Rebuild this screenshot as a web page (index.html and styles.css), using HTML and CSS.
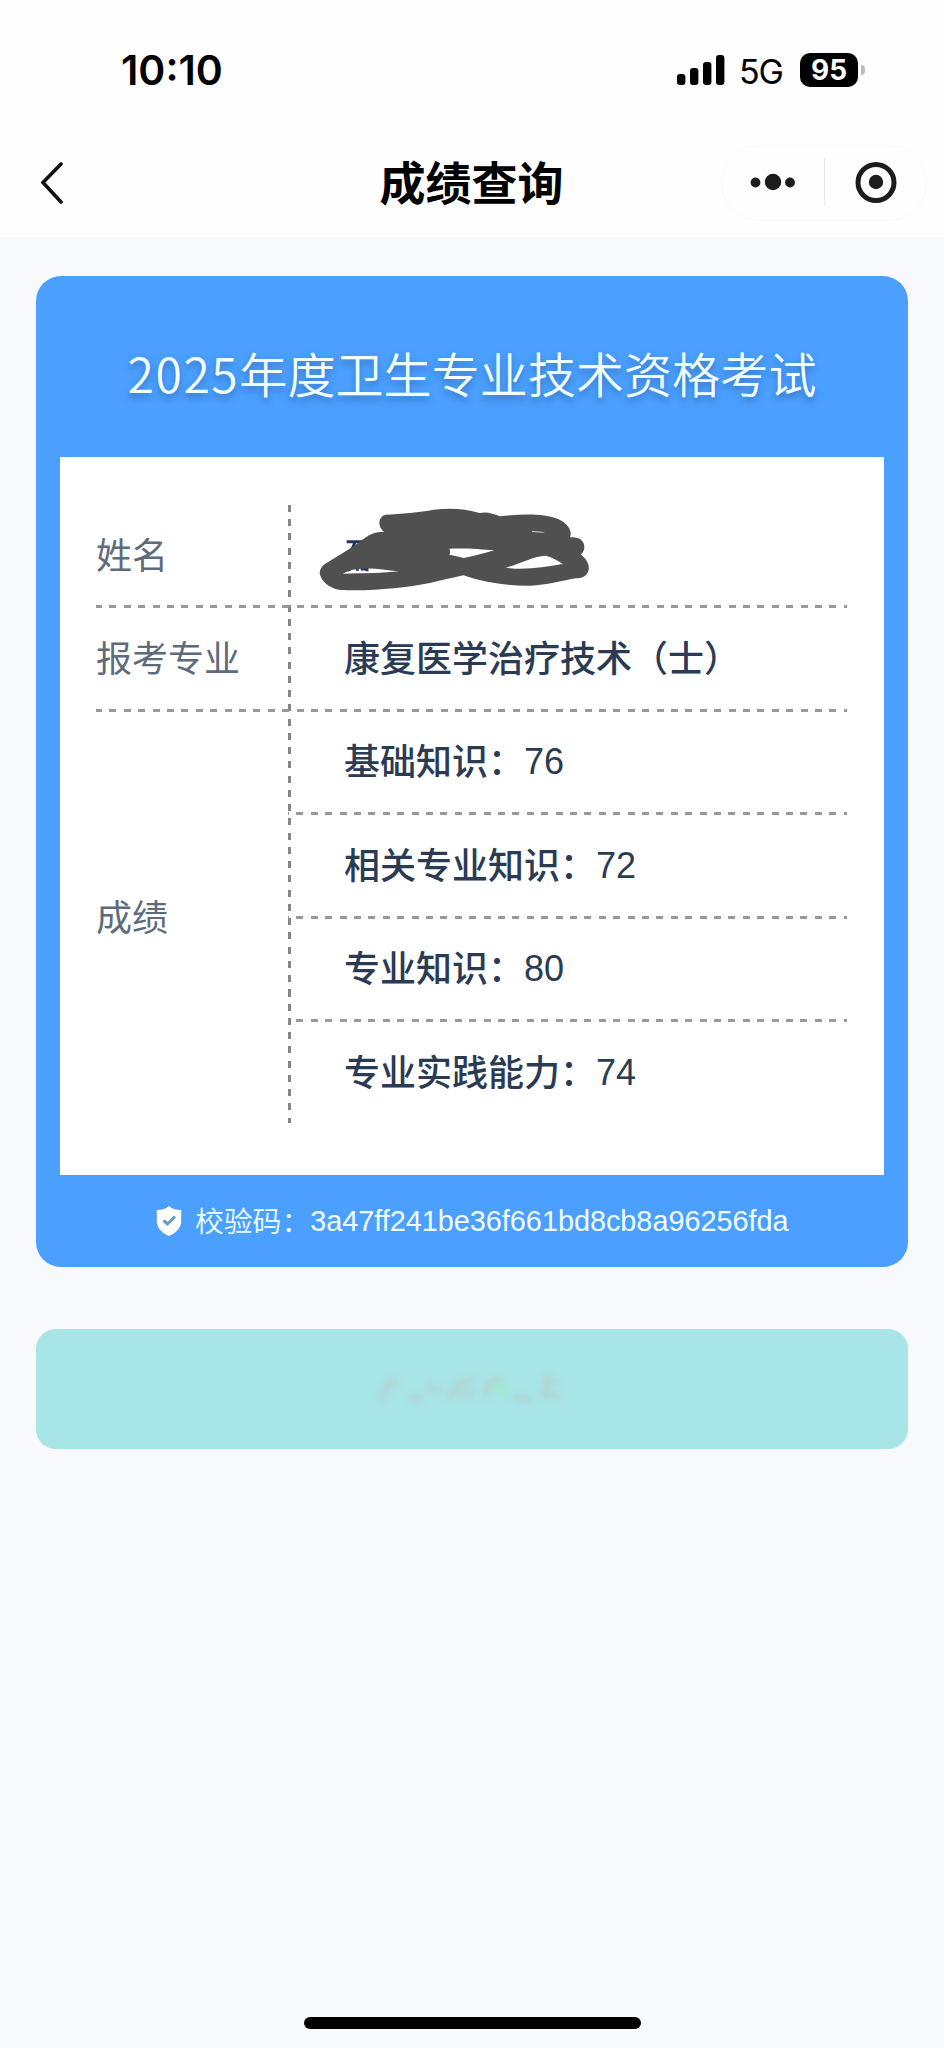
FILE: index.html
```
<!DOCTYPE html>
<html lang="zh-CN">
<head>
<meta charset="UTF-8" />
<title>成绩查询</title>
<link rel="stylesheet" href="styles.css">
</head>
<body>

<div class="status-bar">
  <span class="time">10:10</span>
  <div class="status-right">
    <svg class="signal" width="48" height="30" viewBox="0 0 48 30">
      <rect x="0" y="19" width="8.4" height="11" rx="3" />
      <rect x="13" y="13" width="8.4" height="17" rx="3" />
      <rect x="26" y="7" width="8.4" height="23" rx="3" />
      <rect x="39" y="0" width="8.4" height="30" rx="3" />
    </svg>
    <span class="network">5G</span>
    <span class="battery">95</span>
    <span class="battery-tip"></span>
  </div>
</div>

<div class="nav">
  <svg class="back" width="24" height="42" viewBox="0 0 24 42">
    <path d="M21 2 L3 20.5 L21 40" />
  </svg>
  <h1>成绩查询</h1>
  <div class="capsule">
    <svg width="204" height="74" viewBox="0 1 204 74">
      <circle cx="33.5" cy="37.5" r="4.9" />
      <circle cx="51" cy="37" r="8.2" />
      <circle cx="68" cy="37.5" r="4.9" />
      <path class="divider" d="M102.5 12 V61" />
      <circle class="ring" cx="154" cy="37.5" r="18" />
      <circle cx="154" cy="37" r="7.2" />
    </svg>
  </div>
</div>

<div class="card">
  <h2><span class="year">2025</span>年度卫生专业技术资格考试</h2>

  <div class="sheet">
    <div class="table">
      <div class="row">
        <div class="label">姓名</div>
        <div class="value">
          <svg class="scribble" width="280" height="90" viewBox="80 75 840 270">
            <g class="name-mark">
              <path d="M169 182 H215 M194 183 Q190 198 181 210" />
              <path d="M172 268 L184 261 M201 256 V269 M211 264 H230 V271 M465 211 H474 V218" />
            </g>
            <path class="ink" fill-rule="evenodd" d="M281 152 C262 140 262 108 285 101 C330 99 390 94 430 86 C480 80 525 83 568 96 C590 91 606 97 629 106 C690 99 760 96 805 115 C833 128 847 151 839 169 C869 167 883 180 882 201 C880 214 870 221 872 221 C889 233 898 252 895 267 C889 289 873 291 857 292 C810 300 770 312 720 314 C650 315 580 305 519 283 C450 298 390 316 310 322 C250 328 190 330 144 326 C115 320 93 301 88 277 C89 259 100 250 115 242 C155 218 184 201 206 184 C238 158 252 153 281 152 Z
              M157 278 C174 268 197 262 222 263 C251 261 286 267 326 271 C277 276 225 277 157 278 Z
              M477 203 C525 201 575 205 612 208 C585 215 554 225 520 231 C504 226 492 224 477 221 Z
              M647 260 C693 247 730 225 766 224 C787 229 805 240 817 249 C760 258 703 269 647 260 Z
              M725 151 Q745 151 765 154 Q750 155 725 153 Z" />
          </svg>
        </div>
      </div>
      <div class="row">
        <div class="label">报考专业</div>
        <div class="value">康复医学治疗技术（士）</div>
      </div>
      <div class="row scores">
        <div class="label">成绩</div>
        <div class="score-list">
          <div class="value">基础知识：<span class="num">76</span></div>
          <div class="value">相关专业知识：<span class="num">72</span></div>
          <div class="value">专业知识：<span class="num">80</span></div>
          <div class="value">专业实践能力：<span class="num">74</span></div>
        </div>
      </div>
    </div>
  </div>

  <div class="verify">
    <svg class="shield" width="26" height="30" viewBox="0 0 26 30">
      <path d="M13 0 C16 3 21 4 25.2 4 V15 C25.2 22 20 27 13 30 C6 27 .8 22 .8 15 V4 C5 4 10 3 13 0 Z" />
      <path class="check" d="M7.5 14.5 L11.5 18 L19 10.5" />
    </svg>
    <span class="verify-label">校验码：</span><span class="code">3a47ff241be36f661bd8cb8a96256fda</span>
  </div>
</div>

<div class="action">
  <!-- faded caption -->
  <svg width="190" height="46" viewBox="0 0 190 46">
    <path d="M4 35 L12 16 L22 18 M32 33 L46 30 M50 20 L64 26 M72 34 L80 18 L97 14 M80 27 L98 28 M108 32 L112 16 L126 13 M136 30 L156 34 M166 34 L170 12 L180 18 M164 25 L182 30" />
    <path class="tint" d="M120 24 L130 26" />
  </svg>
</div>

<div class="home-bar"></div>

</body>
</html>
```
FILE: styles.css
```
* {
  box-sizing: border-box;
}
body {
  margin: 0;
  height: 2048px;
  display: flex;
  flex-direction: column;
  background-color: #f8f9fd;
  font-family: "Liberation Sans", "Noto Sans CJK SC", sans-serif;
  overflow: hidden;
}
.status-bar {
  height: 128px;
  padding: 12px 79px 0 121px;
  display: flex;
  align-items: center;
  justify-content: space-between;
  background: #fefefe;
  font-family: Inter, sans-serif;
}
.time {
  font-size: 41px;
  font-weight: 600;
}
.status-right {
  display: flex;
  align-items: center;
}
.network {
  margin: 2px 17px 0 14px;
  font-size: 34px;
  letter-spacing: -1px;
}
.battery {
  width: 58px;
  height: 34px;
  line-height: 34px;
  border-radius: 10px;
  background: #000;
  color: #fff;
  font-size: 28px;
  font-weight: 700;
  text-align: center;
}
.battery-tip {
  width: 4px;
  height: 10px;
  margin-left: 3px;
  border-radius: 0 4px 4px 0;
  background: #bbb;
}
.nav {
  height: 109px;
  padding: 0 17px 0 40px;
  display: grid;
  grid-template-columns: 206px 1fr 206px;
  align-items: center;
  background: #fefefe;
}
.back {
  fill: none;
  stroke: #111;
  stroke-width: 3.6;
  stroke-linecap: round;
}
.nav h1 {
  margin: 2px 24px 0 0;
  font-size: 46px;
  line-height: 60px;
  font-weight: 700;
  text-align: center;
}
.capsule {
  height: 76px;
  border: 1px solid #fafafa;
  border-radius: 38px;
  fill: #1c1c1c;
}
.capsule svg {
  display: block;
}
.divider {
  stroke: #e9e9e9;
  stroke-width: 1;
}
.ring {
  fill: none;
  stroke: #1c1c1c;
  stroke-width: 5;
}
.card {
  margin: 39px 36px 0;
  padding: 0 24px;
  height: 991px;
  border-radius: 25px;
  background: #4a9fff;
  color: #f2ffff;
}
.card h2 {
  margin: 0 -20px;
  height: 181px;
  padding-top: 15px;
  line-height: 162px;
  font-family: "Noto Sans CJK SC", sans-serif;
  font-size: 48px;
  font-weight: 350;
  letter-spacing: 0.1px;
  text-align: center;
  white-space: nowrap;
  text-shadow: 0 4px 6px rgba(40, 80, 130, 0.5);
}
.year {
  letter-spacing: 1.6px;
}
.sheet {
  height: 718px;
  padding: 48px 37px 0 36px;
  background: #fff;
}
/* vertical dashed rule runs behind every row */
.table {
  height: 618px;
  background: repeating-linear-gradient(to bottom, #858585 0 7px, transparent 7px 14.25px) 192px 0 / 3px 100% no-repeat;
}
.row {
  display: grid;
  grid-template-columns: 192px 1fr;
  height: 103.4px;
}
.row:not(.scores) {
  background: repeating-linear-gradient(to right, #999 0 6px, transparent 6px 13.4px, #999 13.4px 14.4px) 0 100% / 100% 3px no-repeat;
}
.score-list .value:not(:last-child) {
  background: repeating-linear-gradient(to right, #999 0 1px, transparent 1px 8.5px, #999 8.5px 14.4px) 0 100% / 100% 3px no-repeat;
}
.row.scores {
  height: 413px;
}
.label {
  display: flex;
  align-items: center;
  color: #5d6b7c;
  font-size: 36px;
  line-height: 50px;
}
.value {
  position: relative;
  display: flex;
  align-items: center;
  height: 103.4px;
  padding-left: 56px;
  color: #2c3b54;
  font-size: 36px;
  font-weight: 500;
  line-height: 50px;
}
.num {
  margin-bottom: 2px;
  font-weight: 400;
}
.scribble {
  position: absolute;
  left: 29px;
  top: 1px;
}
.ink {
  fill: #505050;
}
.name-mark {
  fill: none;
  stroke: #25345a;
  stroke-width: 9;
}
.verify {
  height: 92px;
  padding-left: 96px;
  display: flex;
  align-items: center;
  font-size: 28.8px;
  font-weight: 350;
}
.verify-label {
  margin-bottom: 3px;
}
.shield {
  margin-right: 13px;
  fill: #fff;
}
.check {
  fill: none;
  stroke: #659bc5;
  stroke-width: 3;
}
.code {
  font-weight: 400;
}
.action {
  height: 120px;
  margin: 62px 36px 0;
  display: flex;
  align-items: center;
  justify-content: center;
  border-radius: 20px;
  background: #a8e5e7;
}
.action svg {
  fill: none;
  stroke: #afd6d4;
  stroke-width: 7;
  filter: blur(3px);
}
.action .tint {
  stroke: #9cebc8;
  stroke-width: 9;
}
.home-bar {
  width: 337px;
  height: 12px;
  margin: auto auto 19px;
  border-radius: 6px;
  background: #000;
}
```
